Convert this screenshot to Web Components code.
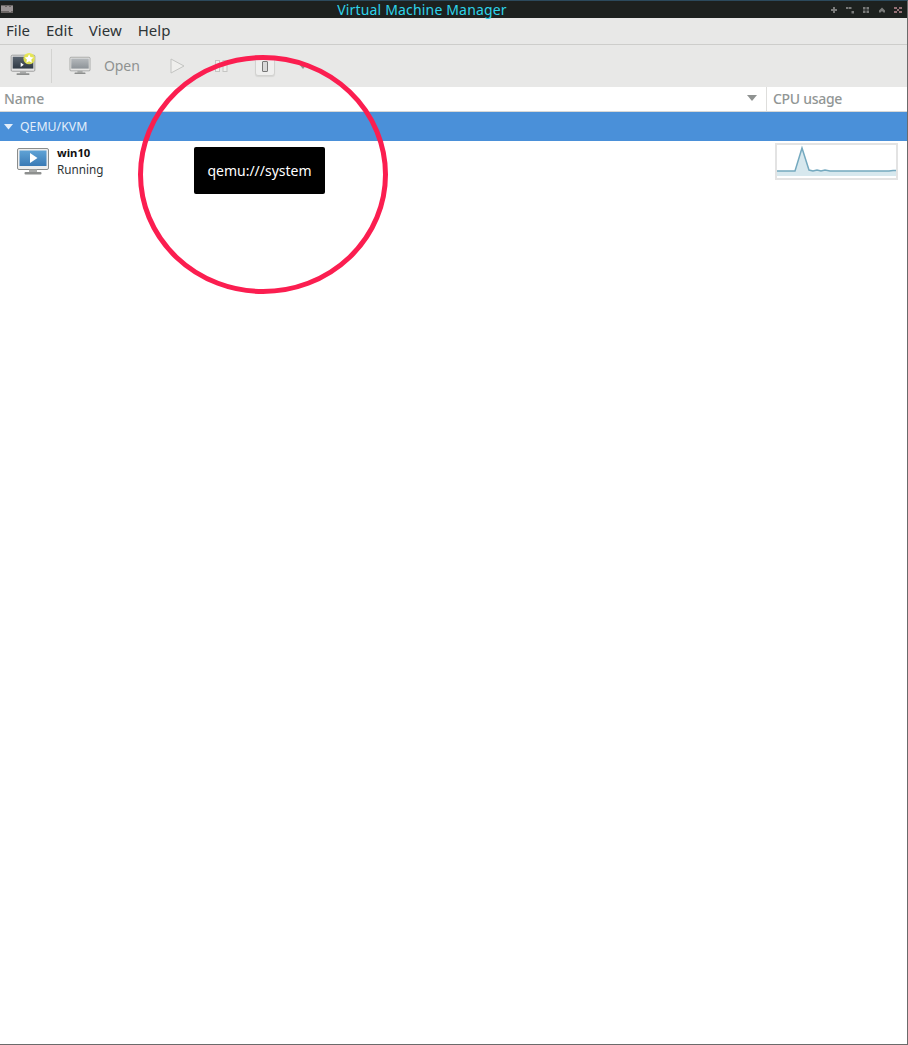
<!DOCTYPE html>
<html>
<head>
<meta charset="utf-8">
<title>Virtual Machine Manager</title>
<style>
html, body { margin: 0; padding: 0; height: 100%; background: #fff; }
body { font-family: "Noto Sans", "Open Sans", sans-serif; overflow: hidden; }
</style>
</head>
<body>
<vm-window>
  <vm-titlebar slot="title">Virtual Machine Manager</vm-titlebar>
  <vm-menubar slot="menu"></vm-menubar>
  <vm-toolbar slot="tools"></vm-toolbar>
  <vm-list slot="list"></vm-list>
</vm-window>
<script>
let gradId = 0;
const screenIcon = (fill1, fill2, frame, extra) => {
    const id = 'sg' + (++gradId);
    return `
<svg width="34" height="30" viewBox="0 0 34 30">
  <defs><linearGradient id="${id}" x1="0" y1="0" x2="0" y2="1">
    <stop offset="0" stop-color="${fill1}"/><stop offset="1" stop-color="${fill2}"/>
  </linearGradient></defs>
  <rect x="1.5" y="1.5" width="31" height="21" rx="1.5" fill="${frame}" stroke="#8b8d8c"/>
  <rect x="3.5" y="3.5" width="27" height="15.5" fill="url(#${id})"/>
  <rect x="13" y="22.5" width="8" height="3" fill="#a9abaa"/>
  <rect x="8.5" y="25" width="17" height="2.5" rx="1" fill="#8d8f8e"/>
  ${extra || ''}
</svg>`;
};

class VmWindow extends HTMLElement {
    constructor() {
        super();
        this.attachShadow({mode: 'open'});
        this.shadowRoot.innerHTML = `
<style>
:host { display: flex; flex-direction: column; box-sizing: border-box; width: 908px; height: 1045px;
  border-right: 1px solid #6b6b6b; border-bottom: 1px solid #6b6b6b; border-top: 1px solid #2c4a5c; position: relative; }
.ring { position: absolute; left: 138px; top: 54px; width: 250px; height: 240px; pointer-events: none; }
.tip { position: absolute; left: 194px; top: 146px; width: 131px; height: 47px; box-sizing: border-box;
  background: #000; color: #fff; border-radius: 2px; font-size: 14px; display: flex; align-items: center; justify-content: center; }
</style>
<slot name="title"></slot>
<slot name="menu"></slot>
<slot name="tools"></slot>
<slot name="list"></slot>
<div class="tip">qemu:///system</div>
<svg class="ring" viewBox="0 0 250 240"><ellipse cx="125" cy="119.500" rx="122.500" ry="117" fill="none" stroke="#fb1e50" stroke-width="5"/></svg>`;
    }
}

class VmTitlebar extends HTMLElement {
    constructor() {
        super();
        this.attachShadow({mode: 'open'});
        this.shadowRoot.innerHTML = `
<style>
:host { display: flex; align-items: center; height: 17px; background: #1d211f; color: #2ed3ea; font-size: 14px; letter-spacing: .17px; position: relative; flex: none; }
.label { flex: 1; text-align: center; padding-left: 14px; line-height: 17px; }
.app { position: absolute; left: 1px; top: 4px; }
.btns { display: flex; gap: 8px; padding-right: 5px; align-items: center; }
.btns svg { opacity: .7; }
</style>
<svg class="app" width="12" height="8" viewBox="0 0 12 8"><rect width="12" height="8" fill="#6a6664"/><path d="M1 1v5M3 1v5M5 2v4M7 1v5M9 2v5M11 1v5" stroke="#c9c2c4" stroke-width="1"/></svg>
<div class="label"><slot></slot></div>
<div class="btns">
  <svg width="8" height="8" viewBox="0 0 8 8" fill="#a0a0a0"><path d="M3 1h2v2h2v2H5v2H3V5H1V3h2z"/></svg>
  <svg width="8" height="8" viewBox="0 0 8 8" fill="#a0a0a0"><rect x="0" y="1" width="2.500" height="2"/><rect x="3" y="1" width="2.500" height="2"/><rect x="5.500" y="5" width="2.500" height="2.500"/></svg>
  <svg width="8" height="8" viewBox="0 0 8 8" fill="#a0a0a0"><rect x="1" y="1" width="2.500" height="2.500"/><rect x="4.500" y="1" width="2.500" height="2.500"/><rect x="1" y="4.500" width="2.500" height="2.500"/><rect x="4.500" y="4.500" width="2.500" height="2.500"/></svg>
  <svg width="8" height="8" viewBox="0 0 8 8" fill="#a0a0a0"><path d="M4 1.500l3 3v2H5.500L4 5 2.500 6.500H1v-2z"/></svg>
  <svg width="8" height="8" viewBox="0 0 8 8" fill="#c9929c"><path d="M0 1h3v2H0zM5 1h3v2H5zM3 3h2v2H3zM0 5h3v2H0zM5 5h3v2H5z"/></svg>
</div>`;
    }
}

class VmMenubar extends HTMLElement {
    constructor() {
        super();
        this.attachShadow({mode: 'open'});
        this.shadowRoot.innerHTML = `
<style>
:host { display: flex; align-items: center; height: 27px; box-sizing: border-box; background: #e8e8e7; color: #2e3436;
  font-size: 15px; border-bottom: 1px solid #cdcdcb; padding: 0 0 2px 6px; gap: 16px; flex: none; }
</style>
<span>File</span><span>Edit</span><span>View</span><span>Help</span>`;
    }
}

class VmToolbar extends HTMLElement {
    constructor() {
        super();
        this.attachShadow({mode: 'open'});
        const star = `<circle cx="25" cy="6" r="7.500" fill="#e9e94a" opacity=".9"/>
  <path d="M25 .2l1.800 3.800 4.100.5-3 2.800.8 4.100-3.700-2.100-3.700 2.100.8-4.100-3-2.800 4.100-.5z" fill="#fff"/>
  <path d="M14 11l4 3-4 3z" fill="#fff"/>`;
        this.shadowRoot.innerHTML = `
<style>
:host { display: flex; align-items: center; height: 42px; background: #e8e8e7; flex: none; }
.new { margin-left: 10px; width: 26px; height: 26px; }
.new svg { width: 26px; height: 23px; display: block; margin-top: 1px; overflow: visible; }
.sep { width: 1px; height: 34px; background: #d3d3d1; margin: 0 17px 0 15px; }
.open { display: flex; align-items: center; width: 22px; height: 22px; }
.open svg { width: 22px; height: 20px; }
.lbl { color: #8f9291; font-size: 14px; letter-spacing: -.1px; margin-left: 13px; width: 36px; padding-bottom: 2px; }
.play { margin-left: 30px; }
.pause { margin-left: 30px; }
.shot { margin-left: 27px; width: 20px; height: 20px; box-sizing: border-box; background: #efefee; border: 1px solid #d2d2d0; border-radius: 3px;
  display: flex; align-items: center; justify-content: center; box-shadow: 0 1px 1px #d6d6d4; }
.shot i { display: block; width: 6px; height: 11px; box-sizing: border-box; border: 1px solid #777; border-radius: 1px; background: #d8d8d8; }
.arrow { margin-left: 23px; }
</style>
<div class="new">${screenIcon('#5a6470', '#2f3944', '#e4e4e4', star)}</div>
<div class="sep"></div>
<div class="open">${screenIcon('#b5b9bc', '#8d9398', '#e6e6e5')}</div>
<span class="lbl">Open</span>
<svg class="play" width="15" height="16" viewBox="0 0 15 16"><path d="M1 1l13 7-13 7z" fill="#efefed" stroke="#c3c4c2"/></svg>
<svg class="pause" width="13" height="12" viewBox="0 0 13 12"><rect x=".5" y=".5" width="4" height="11" fill="#efefed" stroke="#c5c5c3"/><rect x="8" y=".5" width="4" height="11" fill="#efefed" stroke="#c5c5c3"/></svg>
<div class="shot"><i></i></div>
<svg class="arrow" width="10" height="6" viewBox="0 0 10 6"><path d="M0 0h10L5 6z" fill="#8f9291"/></svg>`;
    }
}

class VmList extends HTMLElement {
    constructor() {
        super();
        this.attachShadow({mode: 'open'});
        const trace = 'M0 26H18L25 3L32 25L36 26L40 25L44 26L48 25L53 26H112L116 25.500H119';
        this.shadowRoot.innerHTML = `
<style>
:host { display: flex; flex-direction: column; flex: 1; background: #fff; }
.head { display: flex; height: 25px; box-sizing: border-box; border-bottom: 1px solid #d8d8d6; color: #919695; font-size: 14px; font-weight: 500; flex: none; }
.name { flex: 1; display: flex; align-items: center; padding: 0 0 2px 4px; }
.name span { flex: 1; }
.name svg { margin-right: 9px; }
.cpu { width: 141px; box-sizing: border-box; padding: 0 0 2px 6px; border-left: 1px solid #dededc; display: flex; align-items: center; letter-spacing: -.3px; }
.group { height: 29px; background: #4a90d9; color: #e3eefa; display: flex; align-items: center; font-size: 12.300px; padding-left: 4px; gap: 7px; flex: none; }
.vm { display: flex; height: 42px; flex: none; }
.vm .icon { margin: 6px 0 0 16px; width: 34px; height: 30px; }
.text { margin: 3px 0 0 7px; font-size: 11.700px; line-height: 17px; color: #2e3436; }
.text b { display: block; color: #111; font-weight: 700; font-size: 11.300px; }
.graph { margin: 2px 9px 0 auto; width: 123px; height: 37px; box-sizing: border-box; border: 2px solid #e3e3e3; }
.graph svg { display: block; }
</style>
<div class="head">
  <div class="name"><span>Name</span><svg width="10" height="6" viewBox="0 0 10 6"><path d="M0 0h10L5 6z" fill="#8f9291"/></svg></div>
  <div class="cpu">CPU usage</div>
</div>
<div class="group">
  <svg width="9" height="6" viewBox="0 0 9 6"><path d="M0 0h9L4.500 5.500z" fill="#e3eefa"/></svg>
  <span>QEMU/KVM</span>
</div>
<div class="vm">
  <div class="icon">${screenIcon('#5fa3d6', '#3a7ab5', '#eeeeee', '<path d="M14 6l7.500 5-7.500 5z" fill="#fff"/>')}</div>
  <div class="text"><b>win10</b>Running</div>
  <div class="graph"><svg width="119" height="33" viewBox="0 0 119 33">
    <path d="${trace}V31H0z" fill="#d7e8ee"/>
    <path d="${trace}" fill="none" stroke="#74a9bf" stroke-width="1.500"/>
  </svg></div>
</div>`;
    }
}

customElements.define('vm-window', VmWindow);
customElements.define('vm-titlebar', VmTitlebar);
customElements.define('vm-menubar', VmMenubar);
customElements.define('vm-toolbar', VmToolbar);
customElements.define('vm-list', VmList);
</script>
</body>
</html>
